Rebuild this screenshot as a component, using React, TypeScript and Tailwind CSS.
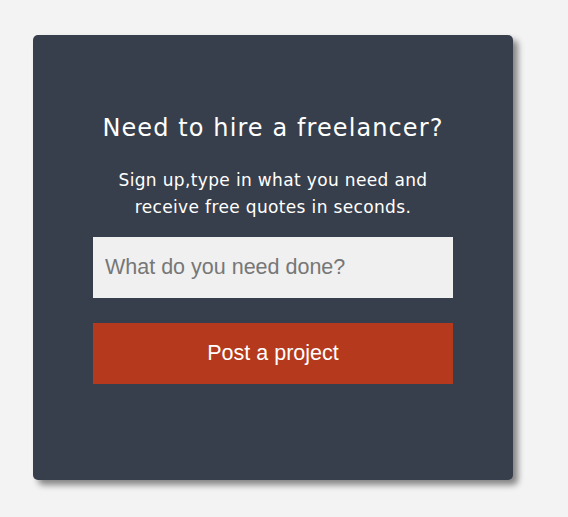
export default function App() {
  return (
    <div className="min-h-[517px] w-full bg-[#f3f3f3] pt-[35px] pl-[33px]">
      <div className="flex h-[445px] w-[480px] flex-col items-center rounded-[5px] bg-[#383f4c] px-[60px] pt-[75px] shadow-[5px_5px_6px_rgba(0,0,0,0.45)]">
        <h2 className="text-center font-['DejaVu_Sans',sans-serif] text-[24px] leading-[36px] font-normal tracking-[1.1px] text-white">
          Need to hire a freelancer?
        </h2>
        <p className="mt-[21px] text-center font-['DejaVu_Sans',sans-serif] text-[17px] leading-[27px] tracking-[0.35px] text-white">
          Sign up,type in what you need and
          <br />
          receive free quotes in seconds.
        </p>
        <input
          type="text"
          placeholder="What do you need done?"
          className="mt-[16px] h-[61px] w-[360px] bg-[#f0f0f0] px-[12px] font-['Liberation_Sans',Arial,sans-serif] text-[21.5px] text-gray-800 outline-none placeholder:text-[#777]"
        />
        <button className="mt-[25px] h-[61px] w-[360px] bg-[#b5391c] font-['Liberation_Sans',Arial,sans-serif] text-[21.5px] text-white">
          Post a project
        </button>
      </div>
    </div>
  )
}
